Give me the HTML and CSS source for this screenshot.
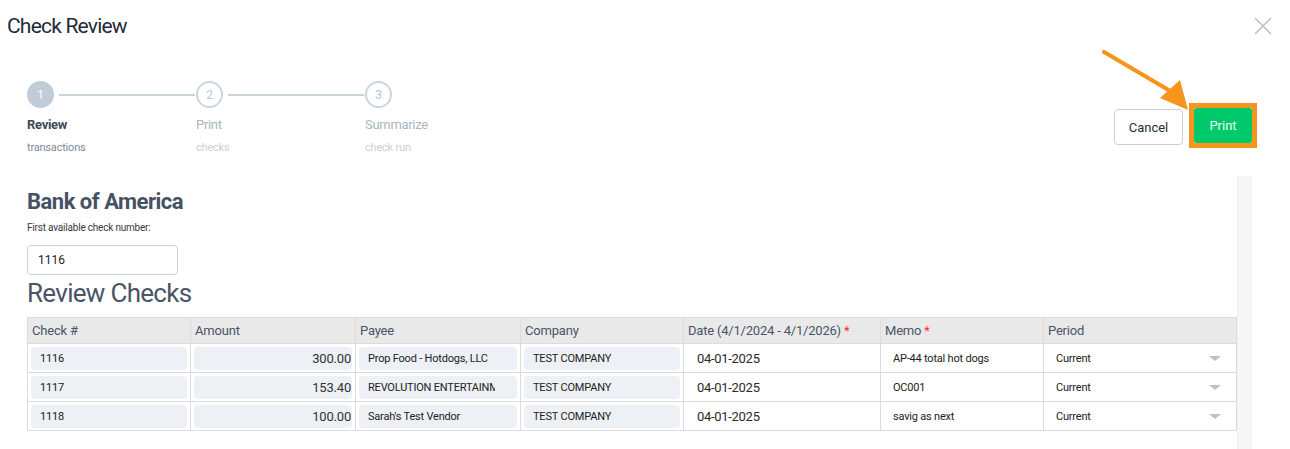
FILE: index.html
```html
<!DOCTYPE html>
<html lang="en">
<head>
  <meta charset="UTF-8" />
  <title>Check Review</title>
  <link rel="stylesheet" href="styles.css">
</head>
<body>
  <div class="modal">
    <div class="modal-header">
      <h1>Check Review</h1>
      <button class="close" aria-label="Close">
        <svg width="18" height="18" viewBox="0 0 18 18"><path d="M1 1L17 17M17 1L1 17" stroke="#b7c2cd" stroke-width="1.6" fill="none"/></svg>
      </button>
    </div>

    <div class="toolbar">
      <div class="stepper">
        <div class="step active">
          <div class="step-top"><span class="dot">1</span><span class="bar"></span></div>
          <div class="step-title">Review</div>
          <div class="step-sub">transactions</div>
        </div>
        <div class="step">
          <div class="step-top"><span class="dot">2</span><span class="bar"></span></div>
          <div class="step-title">Print</div>
          <div class="step-sub">checks</div>
        </div>
        <div class="step last">
          <div class="step-top"><span class="dot">3</span></div>
          <div class="step-title">Summarize</div>
          <div class="step-sub">check run</div>
        </div>
      </div>
      <div class="actions">
        <button class="btn btn-cancel">Cancel</button>
        <span class="highlight"><button class="btn btn-print">Print</button></span>
      </div>
      <svg class="arrow" width="100" height="62" viewBox="0 0 100 62">
        <line x1="2" y1="2" x2="70" y2="42" stroke="#f7941d" stroke-width="4" stroke-linecap="round"/>
        <polygon points="58,48 78,30 86,60" fill="#f7941d"/>
      </svg>
    </div>

    <div class="content">
      <div class="main">
        <h2 class="bank">Bank of America</h2>
        <label class="field-label" for="firstCheck">First available check number:</label>
        <input id="firstCheck" class="field" type="text" value="1116" />
        <h2 class="section">Review Checks</h2>

        <table class="checks">
          <colgroup>
            <col style="width:163px"><col style="width:165px"><col style="width:165px"><col style="width:163px">
            <col style="width:197px"><col style="width:163px"><col>
          </colgroup>
          <thead>
            <tr>
              <th>Check #</th><th>Amount</th><th>Payee</th><th>Company</th>
              <th>Date (4/1/2024 - 4/1/2026) <span class="req">*</span></th>
              <th>Memo <span class="req">*</span></th><th>Period</th>
            </tr>
          </thead>
          <tbody id="rows"></tbody>
        </table>
      </div>
      <div class="scroll"></div>
    </div>
  </div>

  <script>
    const checks = [
      { num: "1116", amount: "300.00", payee: "Prop Food - Hotdogs, LLC", company: "TEST COMPANY", date: "04-01-2025", memo: "AP-44 total hot dogs", period: "Current" },
      { num: "1117", amount: "153.40", payee: "REVOLUTION ENTERTAINMENT", company: "TEST COMPANY", date: "04-01-2025", memo: "OC001", period: "Current" },
      { num: "1118", amount: "100.00", payee: "Sarah's Test Vendor", company: "TEST COMPANY", date: "04-01-2025", memo: "savig as next", period: "Current" }
    ];

    const tbody = document.getElementById("rows");
    checks.forEach(c => {
      tbody.innerHTML += `<tr>
        <td><div class="pill"><span>${c.num}</span></div></td>
        <td><div class="pill num"><span>${c.amount}</span></div></td>
        <td><div class="pill"><span>${c.payee}</span></div></td>
        <td><div class="pill"><span>${c.company}</span></div></td>
        <td class="date">${c.date}</td>
        <td class="memo">${c.memo}</td>
        <td class="period"><span>${c.period}</span><span class="caret"></span></td>
      </tr>`;
    });
  </script>
</body>
</html>
```

FILE: styles.css
```css
body {
  margin: 0;
  background: #ffffff;
  font-family: Roboto, "Liberation Sans", Arial, sans-serif;
  color: #333;
}
.modal {
  position: relative;
}
.modal-header {
  display: flex;
  justify-content: space-between;
  align-items: flex-start;
  height: 50px;
  padding: 0 18px 0 7px;
}
.modal-header h1 {
  margin: 14px 0 0;
  font-size: 21px;
  font-weight: 400;
  letter-spacing: -0.8px;
  color: #1e2b3a;
}
.close {
  background: none;
  border: none;
  padding: 0;
  margin-top: 17px;
  cursor: pointer;
}

/* stepper + buttons */
.toolbar {
  position: relative;
  display: flex;
  justify-content: space-between;
  padding: 31px 33px 0 27px;
  height: 95px;
  box-sizing: border-box;
}
.stepper {
  display: flex;
}
.step {
  width: 169px;
}
.step.last {
  width: auto;
}
.step-top {
  display: flex;
  align-items: center;
}
.dot {
  width: 27px;
  height: 27px;
  box-sizing: border-box;
  border-radius: 50%;
  border: 2px solid #cbd5df;
  background: #fff;
  color: #b9c4cf;
  font-size: 12px;
  display: flex;
  align-items: center;
  justify-content: center;
  flex-shrink: 0;
}
.step.active .dot {
  background: #c0cdd9;
  border-color: #c0cdd9;
  color: #fff;
}
.bar {
  flex: 1;
  height: 2px;
  background: #c8d3de;
  margin: 0 1px 0 5px;
}
.step-title {
  margin-top: 9px;
  font-size: 13px;
  line-height: 16px;
  letter-spacing: -0.3px;
  color: #a9b5c1;
}
.step-sub {
  margin-top: 8px;
  font-size: 11px;
  line-height: 14px;
  letter-spacing: -0.2px;
  color: #c8d1da;
}
.step.active .step-title {
  font-weight: 700;
  color: #3d4858;
}
.step.active .step-sub {
  color: #7f8a97;
}
.actions {
  display: flex;
  align-items: center;
  gap: 6px;
  margin-top: 22px;
  align-self: flex-start;
}
.btn {
  font-family: inherit;
  font-size: 13px;
  border-radius: 4px;
  cursor: pointer;
}
.btn-cancel {
  width: 69px;
  height: 36px;
  margin-top: 3px;
  background: #fff;
  border: 1px solid #c9cfd6;
  color: #1e2b3a;
}
.highlight {
  display: inline-block;
  border: 5px solid #f7941d;
  line-height: 0;
}
.btn-print {
  width: 58px;
  height: 35px;
  background: #00c96b;
  border: none;
  border-radius: 2px;
  color: #eafff3;
}
.arrow {
  position: absolute;
  left: 1102px;
  top: 0;
}

/* content */
.content {
  display: flex;
  margin-top: 31px;
}
.main {
  width: 1210px;
  padding-left: 27px;
}
.scroll {
  width: 14px;
  height: 273px;
  background: #f7f7f7;
  border-left: 1px solid #efefef;
}
.bank {
  margin: 13px 0 0;
  font-size: 22px;
  font-weight: 700;
  letter-spacing: -0.5px;
  color: #465263;
}
.field-label {
  display: block;
  margin-top: 8px;
  font-size: 10px;
  letter-spacing: -0.2px;
  color: #3a3a3a;
}
.field {
  display: block;
  margin-top: 12px;
  width: 151px;
  height: 30px;
  box-sizing: border-box;
  border: 1px solid #c8d2dc;
  border-radius: 4px;
  padding: 0 10px;
  font-family: inherit;
  font-size: 12px;
  color: #222;
}
.section {
  margin: 2px 0 0;
  font-size: 26px;
  font-weight: 400;
  letter-spacing: -0.7px;
  line-height: 32px;
  color: #4a5566;
}

/* table */
.checks {
  margin-top: 8px;
  width: 1210px;
  border-collapse: collapse;
  table-layout: fixed;
  font-size: 11px;
  letter-spacing: -0.2px;
}
.checks th {
  height: 25px;
  padding: 0 4px;
  background: #e9e9e9;
  border: 1px solid #dcdcdc;
  text-align: left;
  font-weight: 400;
  font-size: 13px;
  color: #4a5566;
}
.checks td {
  height: 28px;
  padding: 0 3px;
  border: 1px solid #dcdcdc;
  color: #222;
  vertical-align: middle;
}
.req {
  color: #ff2d2d;
}
.pill {
  background: #edf0f4;
  border-radius: 4px;
  height: 23px;
  line-height: 23px;
  padding: 0 22px 0 9px;
}
.pill span {
  display: block;
  white-space: nowrap;
  overflow: hidden;
}
.pill.num {
  text-align: right;
  padding: 0 1px 0 9px;
  font-size: 13px;
  color: #333;
}
.checks td.date {
  padding-left: 13px;
  font-size: 13px;
  letter-spacing: -0.3px;
  color: #2a2a2a;
}
.checks td.memo {
  padding-left: 12px;
}
.checks td.period {
  padding: 0 14px 0 12px;
}
.period {
  position: relative;
}
.caret {
  position: absolute;
  right: 15px;
  top: 12px;
  border-left: 6px solid transparent;
  border-right: 6px solid transparent;
  border-top: 5px solid #b5c2cf;
}
```
